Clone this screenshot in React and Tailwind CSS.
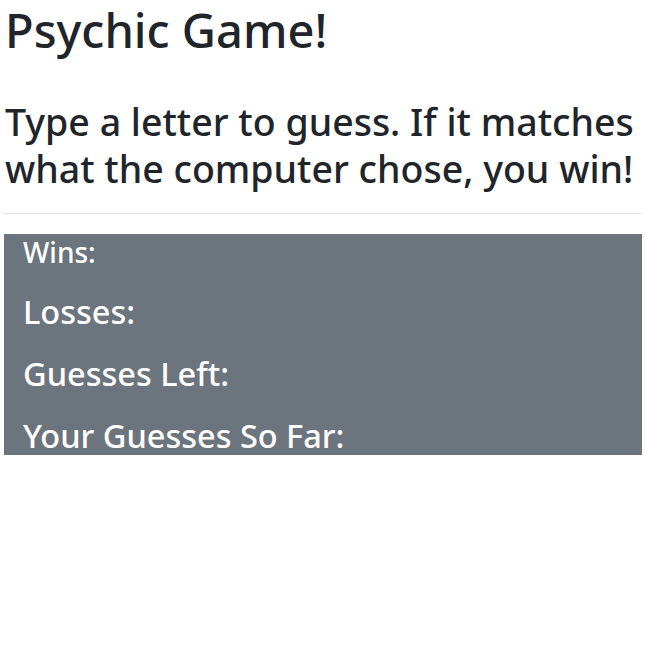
export default function App() {
  return (
    <div className="min-h-[645px] bg-white pl-[4px] pr-[3px] text-[#212529]" style={{ fontFamily: '"Noto Sans", "Open Sans", sans-serif' }}>
      <h1 className="pl-[1px] text-[47px] font-medium leading-[60px]">Psychic Game!</h1>
      <h2 className="mt-[38px] pl-[1px] text-[37.5px] font-medium leading-[47px]">
        Type a letter to guess. If it matches what the computer chose, you win!
      </h2>
      <hr className="mt-[21px] border-t border-[#e5e5e5]" />
      <div className="mt-[20px] h-[221px] overflow-hidden bg-[#6c757d] pl-[19px] pt-[1px] font-medium text-white">
        <h5 className="text-[28px] leading-[34px]">Wins:</h5>
        <h4 className="mt-[23px] text-[32.5px] leading-[39px]">Losses:</h4>
        <h4 className="mt-[23px] text-[32.5px] leading-[39px]">Guesses Left:</h4>
        <h4 className="mt-[23px] text-[32.5px] leading-[39px]">Your Guesses So Far:</h4>
      </div>
    </div>
  );
}
